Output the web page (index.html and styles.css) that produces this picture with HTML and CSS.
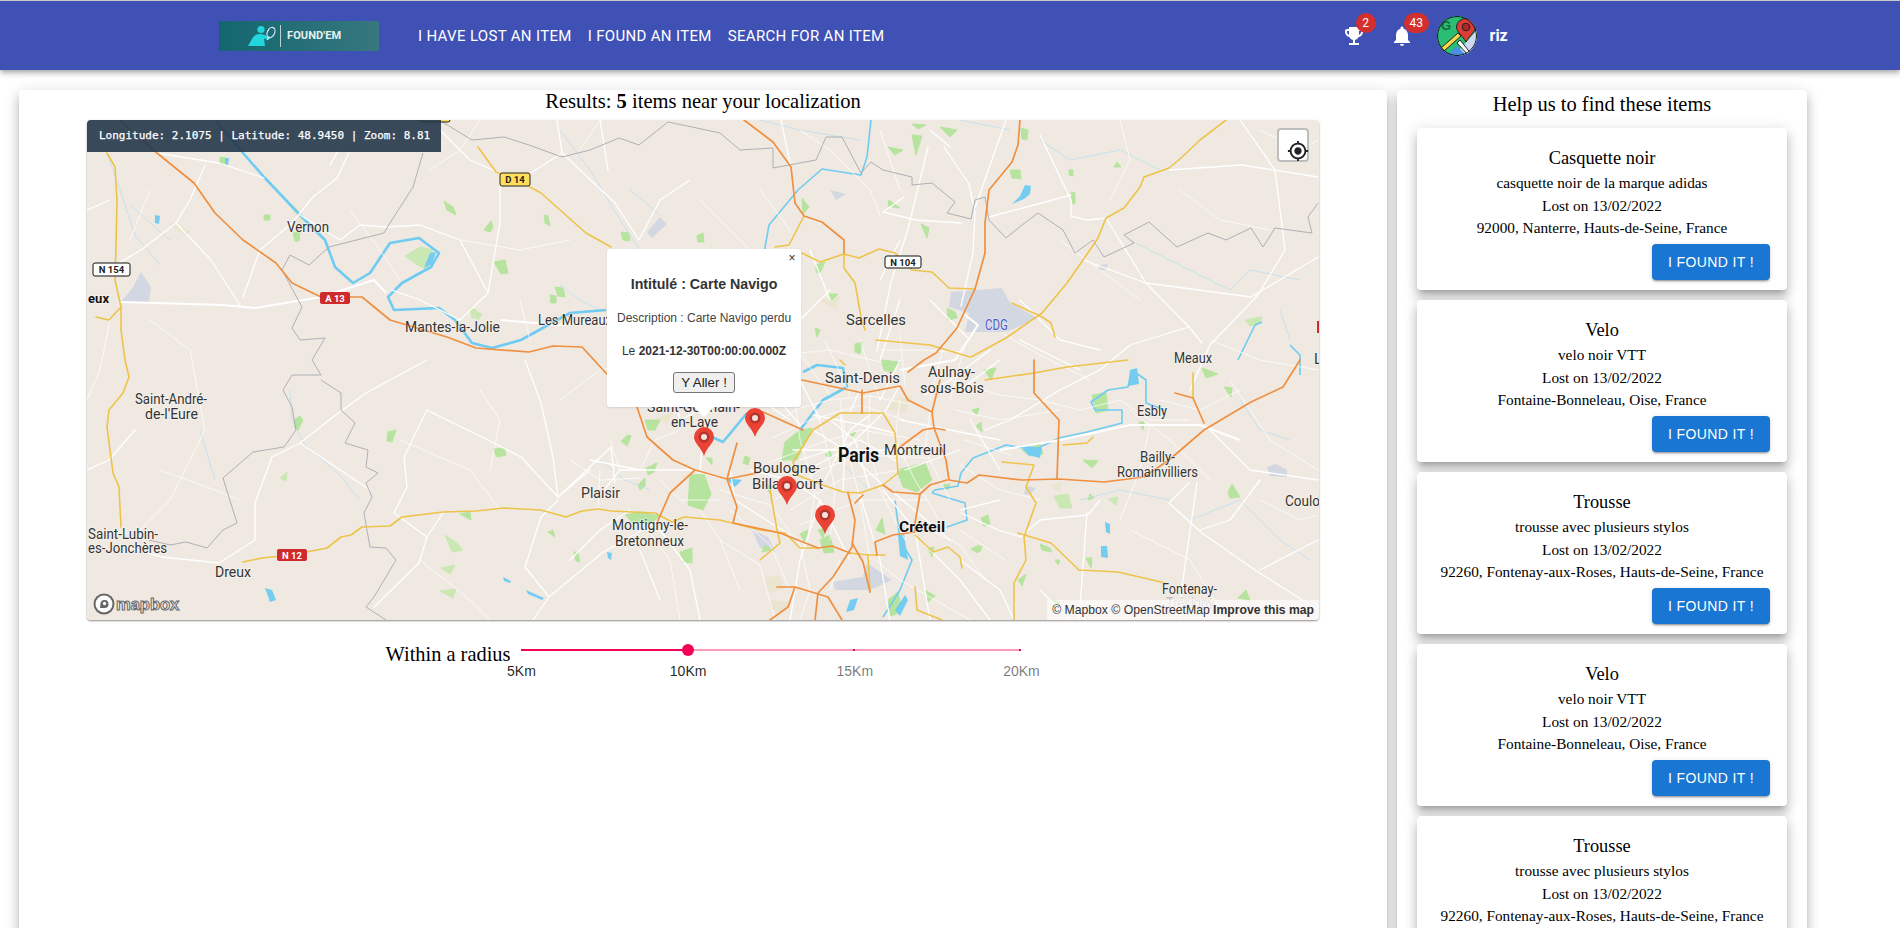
FILE: index.html
```html
<!DOCTYPE html>
<html lang="en">
<head>
<meta charset="utf-8">
<title>Found'Em</title>
<link rel="stylesheet" href="styles.css">
</head>
<body>
<header class="navbar">
  <div class="logo">
    <svg class="logo-fig" viewBox="0 0 30 22" width="30" height="22"><circle cx="14" cy="4.5" r="3.6" fill="#22d6de"/><path d="M1 21 L5 14 C7 10 10 8.5 14 9 L18 10 L23 13 L21.5 15 L17 13.5 L18 21 Z" fill="#22d6de"/><ellipse cx="24" cy="7.5" rx="3.6" ry="5.4" transform="rotate(25 24 7.5)" fill="none" stroke="#d5f4f5" stroke-width="1.2"/><path d="M22 12 L20 15" stroke="#d5f4f5" stroke-width="1.2"/></svg>
    <span class="logo-sep"></span>
    <span class="logo-text">FOUND'EM</span>
  </div>
  <nav class="nav">
    <a class="nav-link">I have lost an item</a>
    <a class="nav-link">I found an item</a>
    <a class="nav-link">Search for an item</a>
  </nav>
  <div class="nav-right">
    <div class="icon-wrap">
      <svg viewBox="0 0 24 24" width="24" height="24" fill="#fff"><path d="M19 5h-2V3H7v2H5c-1.1 0-2 .9-2 2v1c0 2.55 1.92 4.63 4.39 4.94.63 1.5 1.98 2.63 3.61 2.96V19H7v2h10v-2h-4v-3.1c1.63-.33 2.98-1.46 3.61-2.96C19.08 12.63 21 10.55 21 8V7c0-1.1-.9-2-2-2zM5 8V7h2v3.82C5.84 10.4 5 9.3 5 8zm14 0c0 1.3-.84 2.4-2 2.82V7h2v1z"/></svg>
      <span class="badge">2</span>
    </div>
    <div class="icon-wrap">
      <svg viewBox="0 0 24 24" width="24" height="24" fill="#fff"><path d="M12 22c1.1 0 2-.9 2-2h-4c0 1.1.89 2 2 2zm6-6v-5c0-3.07-1.64-5.64-4.5-6.32V4c0-.83-.67-1.5-1.5-1.5s-1.5.67-1.5 1.5v.68C7.63 5.36 6 7.92 6 11v5l-2 2v1h16v-1l-2-2z"/></svg>
      <span class="badge">43</span>
    </div>
    <svg class="avatar" viewBox="0 0 40 40" width="40" height="40">
      <defs><clipPath id="av"><circle cx="20" cy="20" r="20"/></clipPath></defs>
      <g clip-path="url(#av)">
        <rect width="40" height="40" fill="#2bbd74"/>
        <path d="M17 40 L40 14 V40 Z" fill="#ced8f2"/>
        <path d="M9 40 L20 30 L30 40 Z" fill="#4a90e2"/>
        <path d="M4 32 L21 17 L24 20 L7 35 Z" fill="#f7d84a" stroke="#222" stroke-width="1"/>
        <path d="M20 27 L32 40 H36 L23 24 Z" fill="#fff" stroke="#222" stroke-width="1"/>
        <path d="M29 26 C25 19 19.500 16 19.500 11 A9.500 8.500 0 0 1 38.500 11 C38.500 16 33 19 29 26 Z" fill="#dc3b36" stroke="#222" stroke-width="1"/>
        <circle cx="29" cy="11" r="3.8" fill="#a82a28" stroke="#222" stroke-width="1"/>
        <text class="avatar-g" x="4" y="14">G</text>
        <circle cx="20" cy="20" r="19.5" fill="none" stroke="#111" stroke-width="1"/>
      </g>
    </svg>
    <span class="username">riz</span>
  </div>
</header>

<main class="page">
  <section class="panel panel-main">
    <h2 class="results">Results: <b>5</b> items near your localization</h2>
    <div class="map">
      <svg class="map-svg" viewBox="87 120 1232 500" xmlns="http://www.w3.org/2000/svg">
        <rect x="87" y="120" width="1232" height="500" fill="#efe9e2"/>

        <g class="airport">
          <path d="M951 292 L1002 288 L1010 303 L1038 318 L1006 332 L965 332 L969 313 L949 307 Z"/>
          <path d="M867 563 L892 580 L870 590 L835 590 L833 582 L863 577 Z"/>
          <path d="M141 272 L151 287 L149 302 L121 302 L133 287 Z"/>
          <path d="M660 217 L667 224 L652 238 L647 232 Z"/>
          <path d="M1267 467 L1276 464 L1287 470 L1287 477 L1270 476 Z"/>
          <path d="M752 530 L768 537 L775 552 L760 548 Z"/>
          <path d="M1026 486 L1036 488 L1030 495 L1024 494 Z"/>
          <path d="M1100 265 L1108 264 L1106 270 L1098 270 Z"/>
          <path d="M830 190 L846 194 L836 200 Z"/>
        </g>

        <g class="sand">
          <path d="M765 578 L780 575 L784 590 L768 592 Z"/>
          <path d="M820 300 L840 296 L836 310 Z"/>
          <path d="M892 400 L912 396 L906 412 L888 410 Z"/>
          <path d="M655 418 L672 412 L668 424 Z"/>
          <path d="M695 400 L705 392 L708 400 Z"/>
          <path d="M770 600 L790 602 L785 612 L772 610 Z"/>
          <path d="M1050 485 L1062 482 L1060 492 Z"/>
          <path d="M760 296 L775 300 L768 310 Z"/>
          <path d="M300 228 L290 205 L296 206 L306 226 Z"/>
          <path d="M185 235 L170 225 L175 222 L190 232 Z"/>
        </g>

        <g class="green">
          <path d="M444 201 L453 207 L456 215 L447 210 Z"/>
          <path d="M484 230 L491 221 L493 227 L490 232 Z"/>
          <path d="M544 215 L548 216 L550 226 L545 223 Z"/>
          <path d="M621 232 L629 233 L630 241 L623 240 Z"/>
          <path d="M697 236 L703 233 L704 242 L698 242 Z"/>
          <path d="M293 233 L300 232 L299 241 L295 241 Z"/>
          <path class="pale" d="M405 256 L420 247 L433 250 L428 270 L416 264 Z"/>
          <path d="M494 262 L505 260 L508 273 L501 274 Z"/>
          <path d="M555 287 L563 288 L565 297 L558 296 Z"/>
          <path d="M550 295 L556 296 L556 303 L551 303 Z"/>
          <path class="pale" d="M470 308 L476 310 L478 318 L472 318 Z"/>
          <path class="pale" d="M472 310 L482 314 L478 320 Z"/>
          <path d="M264 215 L270 215 L270 220 L264 220 Z"/>
          <path d="M220 157 L226 158 L224 165 L220 163 Z"/>
          <path d="M294 420 L300 416 L303 420 L298 430 L295 428 Z"/>
          <path d="M388 432 L396 430 L392 442 L387 441 Z"/>
          <path d="M493 449 L504 448 L506 455 L497 457 Z"/>
          <path class="pale" d="M280 478 L287 472 L286 481 Z"/>
          <path d="M460 514 L470 512 L471 520 Z"/>
          <path class="pale" d="M445 535 L458 544 L463 550 L452 552 Z"/>
          <path class="pale" d="M441 568 L455 565 L450 574 Z"/>
          <path class="pale" d="M440 591 L456 589 L453 598 Z"/>
          <path d="M548 532 L553 530 L555 537 Z"/>
          <path d="M574 552 L578 552 L580 562 L576 561 Z"/>
          <path d="M621 441 L628 435 L631 436 L627 446 Z"/>
          <path d="M646 468 L657 463 L654 472 L648 475 Z"/>
          <path d="M638 485 L645 478 L645 486 L640 490 Z"/>
          <path d="M690 475 L704 474 L711 494 L703 510 L688 505 Z"/>
          <path d="M645 420 L660 420 L655 430 L648 430 Z"/>
          <path d="M625 515 L640 512 L660 516 L650 524 L632 522 Z"/>
          <path d="M680 552 L692 548 L692 563 L683 562 Z"/>
          <path d="M706 458 L712 458 L712 465 Z"/>
          <path d="M912 135 L922 136 L916 155 Z"/>
          <path d="M888 147 L903 150 L895 155 Z"/>
          <path d="M940 127 L957 130 L950 137 Z"/>
          <path d="M912 124 L926 125 L918 129 Z"/>
          <path d="M1021 128 L1028 130 L1027 140 L1022 139 Z"/>
          <path d="M1010 170 L1020 170 L1021 179 L1012 178 Z"/>
          <path d="M1071 192 L1075 193 L1075 204 L1072 203 Z"/>
          <path d="M802 198 L809 207 L803 214 Z"/>
          <path d="M889 200 L900 208 L888 206 Z"/>
          <path d="M921 224 L929 228 L927 238 Z"/>
          <path d="M1114 167 L1121 167 L1117 162 Z"/>
          <path d="M1069 170 L1073 170 L1073 176 L1069 175 Z"/>
          <path d="M816 265 L825 262 L820 273 L816 272 Z"/>
          <path d="M827 294 L838 294 L832 300 Z"/>
          <path d="M947 308 L955 312 L957 318 L948 320 Z"/>
          <path d="M855 344 L862 342 L860 354 L855 352 Z"/>
          <path class="pale" d="M1245 320 L1262 317 L1260 323 L1250 326 Z"/>
          <path d="M882 360 L900 362 L893 372 L884 370 Z"/>
          <path d="M984 370 L996 368 L991 380 Z"/>
          <path d="M972 410 L979 408 L977 415 Z"/>
          <path d="M976 426 L981 422 L982 432 Z"/>
          <path d="M1092 395 L1106 393 L1108 410 L1096 413 Z"/>
          <path d="M1202 368 L1218 374 L1206 378 Z"/>
          <path d="M1224 387 L1232 388 L1231 397 Z"/>
          <path d="M1139 422 L1144 422 L1143 430 Z"/>
          <path d="M1022 450 L1040 444 L1043 454 L1030 456 Z"/>
          <path d="M897 470 L925 463 L932 480 L917 492 L903 487 Z"/>
          <path d="M1083 460 L1098 461 L1092 468 Z"/>
          <path class="pale" d="M1054 496 L1068 494 L1072 508 L1060 508 Z"/>
          <path d="M1090 494 L1094 498 L1088 500 Z"/>
          <path class="pale" d="M1108 499 L1118 497 L1116 505 Z"/>
          <path d="M1228 492 L1232 484 L1240 497 L1230 498 Z"/>
          <path d="M981 518 L988 515 L990 524 L984 526 Z"/>
          <path d="M971 549 L979 545 L978 553 Z"/>
          <path d="M1040 544 L1050 548 L1052 552 L1042 550 Z"/>
          <path d="M1086 558 L1092 558 L1091 568 Z"/>
          <path d="M1018 580 L1026 574 L1022 586 Z"/>
          <path d="M1055 560 L1060 560 L1058 565 Z"/>
          <path d="M1238 598 L1246 590 L1250 600 Z"/>
          <path d="M942 485 L950 484 L948 490 Z"/>
          <path d="M818 530 L826 528 L823 538 Z"/>
          <path d="M800 534 L808 530 L805 542 Z"/>
          <path d="M876 530 L882 518 L885 534 Z"/>
          <path d="M928 548 L934 547 L932 557 Z"/>
          <path d="M975 548 L982 546 L980 552 Z"/>
          <path d="M820 540 L830 535 L834 552 L824 553 Z"/>
          <path d="M785 442 L800 430 L812 428 L797 460 L782 460 Z"/>
          <path d="M888 600 L898 592 L902 612 L890 616 Z"/>
          <path d="M925 590 L935 596 L928 602 Z"/>
          <path d="M745 456 L750 458 L748 465 L743 463 Z"/>
          <path d="M766 484 L772 486 L770 494 Z"/>
          <path d="M815 328 L820 330 L817 337 Z"/>
          <path d="M885 360 L890 365 L882 366 Z"/>
          <path d="M848 434 L856 432 L852 438 Z"/>
          <path d="M825 455 L830 450 L832 458 Z"/>
          <path d="M765 545 L772 550 L762 552 Z"/>
          <path d="M1053 600 L1060 602 L1054 608 Z"/>
        </g>

        <g class="rivlet">
          <path d="M107 153 L120 190 L135 235 L160 265 M130 205 L170 240"/>
          <path d="M200 430 L215 480 M290 390 L292 420 L305 445 L340 475 L360 500"/>
          <path d="M560 285 L580 300 L600 310 M600 460 L625 480 L650 490 M650 390 L670 380 L690 388"/>
          <path d="M1130 240 L1170 260 L1230 290 L1250 270 L1300 280 M1290 340 L1280 310 M1240 400 L1260 430 L1290 440"/>
          <path d="M560 130 L590 170 L620 220 L640 250 M630 190 L660 215"/>
          <path d="M1040 140 L1070 160 L1120 150 L1160 170"/>
          <path d="M1190 520 L1240 500 L1280 540 L1310 560"/>
          <path d="M760 120 L800 130 L860 140 M960 120 L1010 130"/>
          <path d="M1080 500 L1120 490 L1170 500"/>
          <path d="M843 465 L870 490"/>
        </g>

        <g class="water-line">
          <path d="M215 120 L243 153 L264 177 L300 215 L325 240 L335 267 L353 283 L370 273 L390 243 L419 238 L439 253 L431 267 L402 283 L388 297 L394 310 L439 308 L455 320 L472 343 L492 348 L521 340 L570 313 L606 310"/>
          <path d="M747 413 L733 430 L723 442 L712 437"/>
          <path d="M800 430 L823 400 L847 387 L843 368 L817 365 L803 372"/>
        </g>
        <g class="water-thin">
          <path d="M871 120 L867 157 L861 175 L822 169 L798 190 L769 225 L761 270 L749 284"/>
          <path d="M961 473 L973 458 L1006 445 L1034 450 L1059 438 L1087 432 L1122 423 L1122 410 L1095 410 L1091 402 L1108 390 L1128 387 L1132 370 L1146 380 L1146 403 L1165 410"/>
          <path d="M932 493 L965 503 L967 520 L947 527"/>
          <path d="M895 500 L900 540 L912 560 L900 590 L883 617"/>
          <path d="M961 473 L958 486 L935 490 L932 493"/>
          <path d="M1238 360 L1255 325 L1262 322 M1290 345 L1300 355 L1300 375"/>
        </g>
        <g class="lake">
          <path d="M1020 196 L1025 185 L1031 186 L1030 194 L1024 199 L1012 204 Z"/>
          <path d="M265 588 L272 590 L276 600 L270 602 Z"/>
          <path d="M503 577 L511 581 L510 583 L504 581 Z"/>
          <path d="M526 590 L544 598 L542 600 L528 594 Z"/>
          <path d="M607 552 L612 553 L611 560 L608 558 Z"/>
          <path d="M155 215 L160 216 L159 224 L155 223 Z"/>
          <path d="M1101 546 L1107 546 L1108 558 L1101 557 Z"/>
          <path d="M1105 522 L1110 524 L1110 534 L1106 532 Z"/>
          <path d="M1130 370 L1137 368 L1139 384 L1128 386 Z"/>
          <path d="M1020 445 L1042 448 L1040 458 L1028 455 Z"/>
          <path d="M430 253 L436 252 L432 264 L424 268 Z"/>
          <path d="M225 158 L229 158 L228 165 L225 164 Z"/>
          <path d="M725 478 L742 480 L735 487 Z"/>
          <path d="M898 535 L904 534 L908 560 L900 556 Z"/>
          <path d="M850 600 L858 598 L854 610 L846 612 Z"/>
          <path d="M895 610 L905 595 L908 600 L900 616 Z"/>
        </g>

        <g class="road-fine">
          <path d="M780 420 L800 408 L830 400 L870 396 L910 404 M772 438 L810 420 L860 405 L905 420 M770 462 L815 445 L860 430 L920 440"/>
          <path d="M775 500 L820 470 L862 455 L930 458 M790 510 L840 480 L900 470 M800 525 L860 500 L930 500"/>
          <path d="M815 405 L825 440 L835 490 L830 540 M840 400 L848 450 L860 500 L870 560 M870 395 L868 440 L880 490 L905 540"/>
          <path d="M795 400 L800 440 L815 490 L808 540 M900 400 L895 440 L915 480 L945 530 M930 410 L925 450 L950 500"/>
          <path d="M740 360 L770 400 M760 350 L800 395 M790 340 L830 395 M825 340 L850 395 M860 340 L880 400 M900 335 L905 385"/>
          <path d="M945 340 L930 400 M965 345 L950 400 M880 350 L920 350 L960 352 M780 355 L830 350 L880 362"/>
          <path d="M950 380 L1000 395 L1040 400 M955 410 L1000 420 L1060 410 M965 440 L1010 455 M960 465 L1000 490 L1040 500"/>
          <path d="M720 490 L770 505 L800 545 L810 590 L800 620 M730 510 L770 545 L790 590 M720 540 L760 565 L775 620"/>
          <path d="M840 560 L830 590 M875 560 L900 580 L935 600 L970 620 M930 530 L960 545 L985 580 M960 530 L1005 560"/>
          <path d="M640 470 L655 440 L680 430 M660 480 L680 500 L720 500 M700 510 L720 540 L740 590 M640 520 L670 560 L680 620"/>
          <path d="M570 460 L600 480 L640 478 M610 440 L620 470 M598 510 L600 470 M1005 335 L1040 355 L1090 380 M1120 400 L1150 420 L1190 420"/>
          <path d="M1130 410 L1170 440 L1210 480 M1150 425 L1140 470 L1120 520 M1160 400 L1200 410 L1240 390 M1040 400 L1080 410 L1120 400"/>
          <path d="M1230 380 L1270 440 L1318 470 M1210 340 L1260 360 L1318 370 M1260 500 L1300 520 L1318 515 M1130 530 L1190 560 L1220 610"/>
          <path d="M800 130 L830 150 L870 190 L880 215 M760 190 L790 230 M700 200 L740 240 L770 270 M880 130 L900 190"/>
          <path d="M1120 120 L1130 160 L1110 200 M1180 190 L1220 220 L1270 230 M1260 130 L1300 150 L1318 140 M1060 240 L1100 270 L1140 300"/>
          <path d="M150 190 L130 240 M150 320 L190 350 L205 430 L170 500 L130 540 M110 320 L100 370 L87 400 M160 470 L215 490 L240 500"/>
          <path d="M350 210 L380 250 L400 280 M460 240 L520 250 L570 240 M520 300 L530 340 M600 120 L580 150 M480 120 L460 150 L430 170"/>
          <path d="M400 440 L470 470 L500 510 M480 390 L500 420 L490 470 M560 400 L600 370 L640 360 M420 560 L470 600 L490 620"/>
        </g>
        <g class="road-thin">
          <path d="M107 270 L141 250 L176 223 L190 200 L205 165 M176 223 L211 260 L241 307"/>
          <path d="M349 153 L337 178 L313 197 L292 223 L260 250 L243 297 M87 210 L110 200 M87 470 L109 460 L135 430"/>
          <path d="M264 178 L219 163 L157 153 M300 215 L340 240 L360 225 L386 227"/>
          <path d="M500 173 L500 223 L488 293 L460 320 M386 227 L420 225 L460 240 L488 293"/>
          <path d="M557 120 L562 153 L615 203 L639 240 L660 200 L690 180 M562 153 L520 180 L500 173"/>
          <path d="M392 290 L420 300 L460 320 M440 130 L470 160 L500 173 M350 130 L330 165"/>
          <path d="M366 393 L333 417 L300 443 L272 457 L255 503 L255 540 L219 563 L162 557 L120 545 M300 443 L370 490"/>
          <path d="M427 410 L447 420 L488 440 L521 457 L558 497 L611 447 L615 483 M558 497 L590 470"/>
          <path d="M427 410 L404 457 L407 487 L394 513 L427 537 L443 513 M427 537 L419 563 L374 607"/>
          <path d="M558 500 L541 517 L525 567 L549 597 L602 553 L660 520 M549 597 L533 620"/>
          <path d="M525 360 L541 403 L553 457 L558 497 M427 360 L366 393"/>
          <path d="M781 120 L791 167 M944 147 L969 184 L975 212 L973 253 L961 306 M1006 120 L975 208"/>
          <path d="M928 147 L908 229 L891 282 L877 351 M930 130 L950 147"/>
          <path d="M989 217 L1034 205 L1071 195 M1169 170 L1242 165 L1318 177 M1083 260 L1146 283 L1251 297 L1318 257"/>
          <path d="M883 212 L916 220 L961 223 M904 197 L883 212 M1106 218 L1146 283 L1189 327 L1202 343"/>
          <path d="M1189 483 L1169 503 L1202 533 L1255 570 L1318 610 M1197 483 L1181 593 L1181 620 M1087 513 L1079 620"/>
          <path d="M961 513 L998 530 L1022 537 M1189 327 L1130 345 L1100 370 L1060 390 L1010 420 L985 430"/>
          <path d="M1040 135 L1071 200 L1071 216 L1087 220 L1106 218 M1240 120 L1275 170 L1285 250 L1258 295 L1210 345 L1190 390"/>
          <path d="M1210 430 L1250 470 L1318 480 M1260 480 L1230 520 L1200 530 M1318 540 L1260 570"/>
          <path d="M1100 500 L1088 515 L1040 520 L1020 537 M960 560 L1000 590 L1014 620 M1040 590 L1070 620"/>
          <path d="M640 360 L670 380 L680 420 L700 410 L725 400 M640 470 L620 470 L600 495 M590 460 L640 470 L690 470 L727 479"/>
          <path d="M700 470 L704 430 M630 510 L600 530 L570 560 M660 530 L690 570 L700 620 M730 470 L735 500 L790 535"/>
          <path d="M600 120 L608 170 M660 250 L620 300 L607 330 M640 550 L660 600"/>
          <path d="M760 400 L790 420 M800 300 L780 340 M830 290 L800 320 M900 300 L880 360 M930 300 L970 340 M1000 360 L960 390 M970 420 L1000 470"/>
          <path d="M810 250 L830 300 M900 240 L880 280 M1020 300 L1060 340 L1100 350 M1020 340 L1080 370"/>
          <path d="M845 450 L813 430 M845 450 L840 413 M845 450 L883 413 M845 450 L898 450 M845 450 L883 485 M845 450 L843 492 M845 450 L797 475 M845 450 L793 450"/>
          <path d="M813 415 L862 425 L895 433 M800 460 L860 440 L898 462 M825 480 L850 430 L870 415 M870 490 L855 440 L830 420"/>
          <path d="M900 420 L950 430 L1000 440 M905 470 L960 450 M925 395 L950 380 L990 350 M880 400 L900 360"/>
          <path d="M750 470 L790 480 L820 500 L850 560 M820 500 L800 560 L790 620 M860 495 L880 560 L890 620 M883 490 L915 530 L930 620"/>
          <path d="M915 535 L960 580 L990 620 M960 510 L1000 500 M893 492 L950 540 M770 390 L800 425 M800 380 L820 420"/>
          <path d="M860 390 L850 412 M900 385 L885 412"/>
        </g>
        <g class="road-main">
          <path d="M121 302 L223 305 L255 308 L321 297 L374 280 L386 293"/>
          <path d="M500 320 L560 325 L610 320"/>
          <path d="M1000 450 L1060 440 L1130 425 L1200 425 L1240 440"/>
          <path d="M900 370 L955 360 L978 325 L965 315"/>
        </g>

        <g class="border">
          <path d="M439 120 L472 140 L504 137 L529 145 L562 157 L590 150 L619 138 L639 145 L668 122 L692 127 L720 133 L740 150 L773 148 L773 168 L816 160 L826 137 L842 137 L861 173 L871 162 L883 170 L912 177 L912 185 L932 183 L955 202 L947 213 L971 219 L975 200 L985 197 L989 220 L1006 238 L1022 225 L1038 213 L1063 230 L1075 253 L1093 240 L1104 257 L1134 243 L1124 235 L1149 222 L1177 247 L1208 233 L1226 240 L1251 228 L1263 247 L1275 228 L1312 233 L1308 217 L1318 203"/>
          <path d="M423 153 L413 187 L390 223 L384 233 L329 247 L309 265 L290 255 L282 270 L302 307 L292 328 L300 340 L325 338 L312 360 L321 375 L292 375 L283 390 L292 407 L296 430 L284 447 L253 452 L223 478 L237 523 L223 530 L207 548 L186 542 L170 545 L149 540"/>
          <path d="M321 380 L341 393 L341 410 L355 423 L345 443 L368 450 L366 467 L378 473 L366 483 L372 497 L364 513 L370 547 L386 548 L396 560 L374 597 L366 607 L386 620"/>
        </g>

        <g class="yellow">
          <path d="M107 153 L115 167 L117 200 L116 247 L115 280 L121 307 L121 330 L125 360 L129 377 L123 393 L109 410 L107 427 L113 473 L119 487 L121 527"/>
          <path d="M96 317 L109 320 L121 307"/>
          <path d="M243 562 L262 558 L291 555 L327 548 L341 537 L351 535 L362 527 L390 526 L402 517 L443 512 L476 511 L504 508 L541 510 L566 517 L582 511 L598 509 L611 511 L655 513 L672 522 L684 517 L720 520 L760 530 L785 533"/>
          <path d="M478 147 L496 172 L515 179 L541 193 L586 233 L611 247"/>
          <path d="M775 247 L789 245 L804 216 M802 253 L820 262 L844 254 L859 258 L879 249 L895 253 L912 270 L932 272 L949 288 L975 289"/>
          <path d="M844 253 L844 268 L855 283 L861 317 L865 330"/>
          <path d="M1226 120 L1200 140 L1181 158 L1169 168 L1144 177 L1140 187 L1124 208 L1106 218 L1098 238 L1083 260 L1067 283 L1042 313 L1006 338 L971 357"/>
          <path d="M1012 303 L1042 317 L1051 323 L1055 337"/>
          <path d="M813 430 L840 413 L883 413 L895 433 L898 473 L883 485 L860 493 L843 492 L823 485 L797 475 L793 462 Z"/>
          <path d="M770 490 L777 530 L780 543 L760 560 M785 533 L800 548 L818 548 M850 553 L868 555 L885 555"/>
          <path d="M915 587 L917 610 L942 620 M915 535 L933 552 L948 547 L960 557 L962 568"/>
          <path d="M1002 462 L1034 465 L1026 487 L1036 503 L1024 537 L1026 560 L1014 583 L1014 620"/>
          <path d="M1018 533 L1051 543 L1079 570 L1118 572 L1165 583"/>
          <path d="M1193 373 L1193 398 M985 380 L1034 373 L1067 367 L1128 360"/>
          <path d="M1063 445 L1087 443 L1093 437 M876 340 L930 345 L970 357"/>
          <path d="M870 592 L868 555 M840 360 L845 365"/>
        </g>
        <g class="orange">
          <path d="M120 120 L157 153 L194 183 L215 213 L243 240 L276 263 L292 283 L321 297 L362 297 L390 320 L447 337 L476 348 L529 352 L553 346 L582 347 L594 360 L637 407 L647 437 L673 460 L695 470 L727 479 L757 473"/>
          <path d="M695 470 L670 493 L657 523 M737 443 L727 479 L737 507 L733 523 L780 533 L818 548"/>
          <path d="M744 120 L773 142 L791 167 L795 203 L804 216 L822 222 L844 240 L844 253"/>
          <path d="M1020 120 L1018 145 L1012 162 L989 190 L985 223 L985 253 L975 289 L957 328 L936 353 L924 360 L908 372"/>
          <path d="M763 412 L803 430"/>
          <path d="M802 380 L863 393 L900 386 L908 400 L932 412 L934 428 L946 460 L949 480 L967 483 L979 475 L1022 480 L1059 479 L1104 482 L1144 477 L1169 460 L1204 430 L1251 402 L1283 387 L1300 360"/>
          <path d="M862 390 L862 413 M932 412 L940 380 M934 428 L945 430 M934 428 L923 430 L900 447"/>
          <path d="M1034 360 L1034 393 L1059 420 L1057 479 M1175 393 L1193 398 L1204 423"/>
          <path d="M883 485 L893 492 L920 494 L930 485 L947 480 M920 494 L915 523 L915 532 L893 535 L875 542 L877 555"/>
          <path d="M848 493 L855 520 L852 547 L833 577 L818 593 L815 620 M855 503 L863 495 M852 543 L863 562 L870 592"/>
          <path d="M818 548 L832 546 L850 553 M777 587 L795 587 L828 597 L842 620 M795 587 L788 607 L770 620"/>
        </g>

        <g class="shield">
          <rect class="sh-white" x="93" y="263" width="37" height="13" rx="2"/><text class="sh-t" x="111.500" y="273">N 154</text>
          <rect class="sh-yellow" x="500" y="173" width="30" height="13" rx="2"/><text class="sh-t" x="515" y="183">D 14</text>
          <rect class="sh-red" x="320" y="292" width="30" height="12" rx="2"/><text class="sh-t sh-tw" x="335" y="302">A 13</text>
          <rect class="sh-red" x="277" y="549" width="30" height="12" rx="2"/><text class="sh-t sh-tw" x="292" y="559">N 12</text>
          <rect class="sh-white" x="885" y="256" width="36" height="12" rx="2"/><text class="sh-t" x="903" y="266">N 104</text>
          <rect class="sh-yellow" x="420" y="112" width="30" height="10" rx="2"/>
          <rect class="sh-red" x="1317" y="321" width="6" height="12"/>
        </g>

        <g class="labels">
          <text class="lb" x="287" y="232" textLength="42" lengthAdjust="spacingAndGlyphs">Vernon</text>
          <text class="lb" x="405" y="332" textLength="95" lengthAdjust="spacingAndGlyphs">Mantes-la-Jolie</text>
          <text class="lb" x="538" y="325" textLength="74" lengthAdjust="spacingAndGlyphs">Les Mureaux</text>
          <text class="lb lb-b" x="109" y="303" text-anchor="end">eux</text>
          <text class="lb" x="135" y="404" textLength="72" lengthAdjust="spacingAndGlyphs">Saint-André-</text>
          <text class="lb" x="145" y="419" textLength="53" lengthAdjust="spacingAndGlyphs">de-l'Eure</text>
          <text class="lb" x="88" y="539" textLength="70" lengthAdjust="spacingAndGlyphs">Saint-Lubin-</text>
          <text class="lb" x="88" y="553" textLength="79" lengthAdjust="spacingAndGlyphs">es-Jonchères</text>
          <text class="lb" x="215" y="577" textLength="36" lengthAdjust="spacingAndGlyphs">Dreux</text>
          <text class="lb" x="581" y="498" textLength="39" lengthAdjust="spacingAndGlyphs">Plaisir</text>
          <text class="lb" x="612" y="530" textLength="76" lengthAdjust="spacingAndGlyphs">Montigny-le-</text>
          <text class="lb" x="615" y="546" textLength="69" lengthAdjust="spacingAndGlyphs">Bretonneux</text>
          <text class="lb" x="647" y="412" textLength="93" lengthAdjust="spacingAndGlyphs">Saint-Germain-</text>
          <text class="lb" x="671" y="427" textLength="47" lengthAdjust="spacingAndGlyphs">en-Laye</text>
          <text class="lb" x="846" y="325" textLength="60" lengthAdjust="spacingAndGlyphs">Sarcelles</text>
          <text class="lb lb-cdg" x="985" y="330" textLength="23" lengthAdjust="spacingAndGlyphs">CDG</text>
          <text class="lb" x="1174" y="363" textLength="38" lengthAdjust="spacingAndGlyphs">Meaux</text>
          <text class="lb" x="825" y="383" textLength="75" lengthAdjust="spacingAndGlyphs">Saint-Denis</text>
          <text class="lb" x="928" y="377" textLength="47" lengthAdjust="spacingAndGlyphs">Aulnay-</text>
          <text class="lb" x="920" y="393" textLength="64" lengthAdjust="spacingAndGlyphs">sous-Bois</text>
          <text class="lb" x="1137" y="416" textLength="30" lengthAdjust="spacingAndGlyphs">Esbly</text>
          <text class="lb" x="884" y="455" textLength="62" lengthAdjust="spacingAndGlyphs">Montreuil</text>
          <text class="lb lb-b lb-xl" x="838" y="462" textLength="41" lengthAdjust="spacingAndGlyphs">Paris</text>
          <text class="lb" x="753" y="473" textLength="67" lengthAdjust="spacingAndGlyphs">Boulogne-</text>
          <text class="lb" x="752" y="489" textLength="71" lengthAdjust="spacingAndGlyphs">Billancourt</text>
          <text class="lb" x="1140" y="462" textLength="35" lengthAdjust="spacingAndGlyphs">Bailly-</text>
          <text class="lb" x="1117" y="477" textLength="81" lengthAdjust="spacingAndGlyphs">Romainvilliers</text>
          <text class="lb" x="1285" y="506" textLength="35" lengthAdjust="spacingAndGlyphs">Coulo</text>
          <text class="lb lb-b lb-l" x="899" y="532" textLength="46" lengthAdjust="spacingAndGlyphs">Créteil</text>
          <text class="lb" x="1162" y="594" textLength="55" lengthAdjust="spacingAndGlyphs">Fontenay-</text>
          <text class="lb lb-faint" x="1166" y="608" textLength="48" lengthAdjust="spacingAndGlyphs">Trésigny</text>
          <text class="lb" x="1314" y="364">L</text>
        </g>

        <g class="pins">
          <g transform="translate(704 456)"><path class="pin-b" d="M0 0 C-3 -9 -10 -13 -10 -19 A10 10 0 0 1 10 -19 C10 -13 3 -9 0 0 Z"/><circle class="pin-d" cx="0" cy="-19" r="5.5"/><circle class="pin-c" cx="0" cy="-19" r="3"/></g>
          <g transform="translate(755 437)"><path class="pin-b" d="M0 0 C-3 -9 -10 -13 -10 -19 A10 10 0 0 1 10 -19 C10 -13 3 -9 0 0 Z"/><circle class="pin-d" cx="0" cy="-19" r="5.5"/><circle class="pin-c" cx="0" cy="-19" r="3"/></g>
          <g transform="translate(787 505)"><path class="pin-b" d="M0 0 C-3 -9 -10 -13 -10 -19 A10 10 0 0 1 10 -19 C10 -13 3 -9 0 0 Z"/><circle class="pin-d" cx="0" cy="-19" r="5.5"/><circle class="pin-c" cx="0" cy="-19" r="3"/></g>
          <g transform="translate(825 534)"><path class="pin-b" d="M0 0 C-3 -9 -10 -13 -10 -19 A10 10 0 0 1 10 -19 C10 -13 3 -9 0 0 Z"/><circle class="pin-d" cx="0" cy="-19" r="5.500"/><circle class="pin-c" cx="0" cy="-19" r="3"/></g>
        </g>
      </svg>

      <div class="coords">Longitude: 2.1075 | Latitude: 48.9450 | Zoom: 8.81</div>
      <div class="geo">
        <svg viewBox="0 0 24 24" width="22" height="22" fill="#222"><path d="M12 8c-2.21 0-4 1.79-4 4s1.79 4 4 4 4-1.79 4-4-1.79-4-4-4zm8.94 3c-.46-4.17-3.77-7.48-7.94-7.94V1h-2v2.06C6.83 3.52 3.52 6.83 3.06 11H1v2h2.06c.46 4.17 3.77 7.48 7.94 7.94V23h2v-2.06c4.17-.46 7.48-3.77 7.94-7.94H23v-2h-2.06zM12 19c-3.87 0-7-3.13-7-7s3.13-7 7-7 7 3.13 7 7-3.13 7-7 7z"/></svg>
      </div>
      <div class="mapbox-logo">
        <svg viewBox="0 0 22 22" width="22" height="22"><circle cx="11" cy="11" r="9.500" fill="#fff" fill-opacity=".85" stroke="#666" stroke-width="2"/><path d="M7 15 L7.500 10.500 A4 4 0 1 1 11.500 15 Z" fill="#666"/><circle cx="11.500" cy="10.500" r="1.700" fill="#fff"/></svg>
        <span class="mapbox-text">mapbox</span>
      </div>
      <div class="attrib">© Mapbox © OpenStreetMap <b>Improve this map</b></div>

      <div class="popup">
        <button class="popup-close">×</button>
        <p class="popup-title">Intitulé : Carte Navigo</p>
        <p class="popup-desc">Description : Carte Navigo perdu</p>
        <p class="popup-date">Le <b>2021-12-30T00:00:00.000Z</b></p>
        <button class="popup-btn">Y Aller !</button>
        <span class="popup-tip"></span>
      </div>
    </div>

    <div class="radius">
      <span class="radius-label">Within a radius</span>
      <div class="slider">
        <div class="track">
          <div class="track-on"></div>
          <span class="thumb"></span>
          <span class="tick tick-3"></span>
          <span class="tick tick-4"></span>
        </div>
        <div class="marks">
          <span class="mark on"><i>5Km</i></span>
          <span class="mark on"><i>10Km</i></span>
          <span class="mark"><i>15Km</i></span>
          <span class="mark"><i>20Km</i></span>
        </div>
      </div>
    </div>
  </section>

  <aside class="panel panel-side">
    <h2 class="side-title">Help us to find these items</h2>
    <article class="card">
      <h3>Casquette noir</h3>
      <p>casquette noir de la marque adidas</p>
      <p>Lost on 13/02/2022</p>
      <p>92000, Nanterre, Hauts-de-Seine, France</p>
      <div class="card-actions"><button class="found">I found it !</button></div>
    </article>
    <article class="card">
      <h3>Velo</h3>
      <p>velo noir VTT</p>
      <p>Lost on 13/02/2022</p>
      <p>Fontaine-Bonneleau, Oise, France</p>
      <div class="card-actions"><button class="found">I found it !</button></div>
    </article>
    <article class="card">
      <h3>Trousse</h3>
      <p>trousse avec plusieurs stylos</p>
      <p>Lost on 13/02/2022</p>
      <p>92260, Fontenay-aux-Roses, Hauts-de-Seine, France</p>
      <div class="card-actions"><button class="found">I found it !</button></div>
    </article>
    <article class="card">
      <h3>Velo</h3>
      <p>velo noir VTT</p>
      <p>Lost on 13/02/2022</p>
      <p>Fontaine-Bonneleau, Oise, France</p>
      <div class="card-actions"><button class="found">I found it !</button></div>
    </article>
    <article class="card">
      <h3>Trousse</h3>
      <p>trousse avec plusieurs stylos</p>
      <p>Lost on 13/02/2022</p>
      <p>92260, Fontenay-aux-Roses, Hauts-de-Seine, France</p>
      <div class="card-actions"><button class="found">I found it !</button></div>
    </article>
  </aside>
</main>
</body>
</html>
```

FILE: styles.css
```css
* { box-sizing: border-box; }
html, body { margin: 0; height: 100%; overflow: hidden; }
body { background: #fff; font-family: "Liberation Serif", serif; color: #000; }

.navbar {
  position: relative;
  z-index: 2;
  display: flex;
  align-items: center;
  height: 70px;
  padding-left: 219px;
  background: #3f51b5;
  border-top: 1px solid #c9c9c9;
  box-shadow: 0 2px 4px -1px rgba(0,0,0,.2), 0 4px 5px 0 rgba(0,0,0,.14), 0 1px 10px 0 rgba(0,0,0,.12);
  font-family: Roboto, sans-serif;
  color: #fff;
}
.logo {
  display: flex;
  align-items: center;
  width: 160px;
  height: 30px;
  padding-left: 28px;
  background: linear-gradient(90deg, #13666f, #37777f);
}
.logo-fig { flex: none; }
.logo-sep { width: 1px; height: 22px; margin: 0 6px 0 3px; background: #b9d3d5; }
.logo-text { font-size: 11px; font-weight: 700; color: #e4f1f1; letter-spacing: .1px; }
.nav { display: flex; margin-left: 31px; }
.nav-link {
  padding: 6px 8px;
  font-size: 15px;
  line-height: 20px;
  text-transform: uppercase;
  letter-spacing: .33px;
}
.nav-right { display: flex; align-items: center; margin-left: 449px; }
.icon-wrap { position: relative; display: flex; width: 24px; height: 24px; margin-right: 24px; }
.badge {
  position: absolute;
  top: -11px;
  left: 50%;
  margin-left: 2px;
  min-width: 20px;
  height: 20px;
  padding: 0 6px;
  border-radius: 10px;
  background: #d32f2f;
  font-size: 12px;
  line-height: 20px;
  text-align: center;
}
.avatar { flex: none; margin-left: -1px; }
.avatar-g { font: 700 13px "Liberation Sans", sans-serif; fill: #17663f; }
.username { margin-left: 13px; font-size: 16px; font-weight: 700; }

.page { display: flex; align-items: flex-start; gap: 10px; padding: 20px 0 0 19px; }
.panel {
  background: #fff;
  border-radius: 4px;
  box-shadow: 0 5px 5px -3px rgba(0,0,0,.2), 0 8px 10px 1px rgba(0,0,0,.14), 0 3px 14px 2px rgba(0,0,0,.12);
}
.panel-main { flex: none; width: 1368px; min-height: 1000px; padding: 0 68px; }
.panel-side { flex: none; width: 410px; padding: 0 20px 20px; }
.results { margin: 0; height: 30px; font-size: 20.55px; font-weight: 400; line-height: 22px; text-align: center; }
.results b { font-weight: 700; }

.map {
  position: relative;
  height: 500px;
  border-radius: 4px;
  overflow: hidden;
  box-shadow: 0 1px 2px rgba(0,0,0,.45);
}
.map-svg { display: block; width: 100%; height: 100%; }
.airport path { fill: #d3d7e2; }
.sand path { fill: #e8e2c8; opacity: .7; }
.green path { fill: #b6e49e; stroke: #b6e49e; stroke-width: 1; stroke-linejoin: round; }
.green path.pale { fill: #cae8b4; stroke: #cae8b4; }
.lake path { fill: #74cdf0; }
.rivlet path { fill: none; stroke: #bcdff0; stroke-width: .8; }
.water-line path { fill: none; stroke: #6fcbf1; stroke-width: 2.6; stroke-linejoin: round; }
.water-thin path { fill: none; stroke: #6fcbf1; stroke-width: 1.6; stroke-linejoin: round; }
.road-fine path { fill: none; stroke: #fff; stroke-width: .8; stroke-linejoin: round; stroke-linecap: round; opacity: .9; }
.road-thin path { fill: none; stroke: #fff; stroke-width: 1.3; stroke-linejoin: round; stroke-linecap: round; }
.road-main path { fill: none; stroke: #fff; stroke-width: 2; stroke-linejoin: round; }
.border path { fill: none; stroke: #a7a8b0; stroke-width: .9; stroke-linejoin: round; }
.yellow path { fill: none; stroke: #eec34a; stroke-width: 1.6; stroke-linejoin: round; stroke-linecap: round; }
.orange path { fill: none; stroke: #f08f3f; stroke-width: 1.7; stroke-linejoin: round; stroke-linecap: round; }

.sh-white { fill: #fff; stroke: #111; stroke-width: 1; }
.sh-yellow { fill: #ffdf5a; stroke: #222; stroke-width: 1; }
.sh-red { fill: #cf2a2c; }
.sh-t { font: 700 9.5px Roboto, sans-serif; fill: #222; text-anchor: middle; }
.sh-tw { fill: #fff; }

.lb {
  font: 400 14.5px Roboto, sans-serif;
  fill: #333;
  stroke: rgba(255,255,255,.5);
  stroke-width: 1.5;
  paint-order: stroke;
}
.lb-b { font-size: 13px; font-weight: 700; fill: #111; }
.lb-l { font-size: 15px; }
.lb-xl { font-size: 20px; }
.lb-cdg { fill: #4b5cc4; }
.lb-faint { fill: #999; opacity: .6; }

.pin-b { fill: #ea4335; }
.pin-d { fill: #b6352b; }
.pin-c { fill: #f3e4df; }

.coords {
  position: absolute;
  top: 0;
  left: 0;
  width: 354px;
  height: 32px;
  padding: 0 12px;
  background: rgba(35,55,75,.9);
  color: #fff;
  font: 11px/32px "DejaVu Sans Mono", monospace;
  -webkit-text-stroke: .25px #fff;
  white-space: nowrap;
}
.geo {
  position: absolute;
  top: 8px;
  right: 10px;
  display: flex;
  align-items: flex-end;
  justify-content: flex-end;
  width: 32px;
  height: 34px;
  background: #fff;
  border: 2px solid #bdbdbd;
  border-radius: 4px;
}
.geo svg { flex: none; margin: 0 -2px -2px 0; }
.mapbox-logo { position: absolute; left: 6px; bottom: 5px; display: flex; align-items: center; gap: 1px; }
.mapbox-text {
  font: 700 16.5px "Liberation Sans", sans-serif;
  color: #eef;
  -webkit-text-stroke: 1px #666;
}
.attrib {
  position: absolute;
  right: 0;
  bottom: 0;
  height: 20px;
  padding: 0 5px;
  background: rgba(255,255,255,.6);
  color: #333;
  font: 12.2px/20px "Liberation Sans", sans-serif;
  white-space: nowrap;
}
.attrib b { font-weight: 700; }

.popup {
  position: absolute;
  left: 520px;
  top: 129px;
  width: 194px;
  height: 158px;
  padding: 10px 10px 0;
  background: #fff;
  border-radius: 3px;
  box-shadow: 0 1px 2px rgba(0,0,0,.1);
  text-align: center;
  font-family: "Liberation Sans", sans-serif;
  color: #333;
}
.popup p { margin: 0; white-space: nowrap; }
.popup-close {
  position: absolute;
  top: 0;
  right: 0;
  width: 18px;
  height: 18px;
  padding: 0;
  border: 0;
  background: none;
  color: #333;
  font-size: 12px;
  line-height: 18px;
}
.popup-title { padding-top: 17px; font-size: 14.2px; font-weight: 700; line-height: 16px; }
.popup-desc { padding-top: 18px; font-size: 12px; line-height: 16px; color: #444; }
.popup-date { padding-top: 17px; font-size: 12px; line-height: 16px; }
.popup-btn {
  display: block;
  width: 62px;
  height: 21px;
  margin: 13px auto 0;
  padding: 0;
  background: #efefef;
  border: 1px solid #767676;
  border-radius: 3px;
  color: #222;
  font: 13.33px/19px "Liberation Sans", sans-serif;
}
.popup-tip {
  position: absolute;
  left: 87px;
  top: 100%;
  border-left: 10px solid transparent;
  border-right: 10px solid transparent;
  border-top: 10px solid #fff;
}

.radius { display: flex; justify-content: center; gap: 11px; margin-top: 20px; padding-left: 1px; }
.radius-label { margin-top: 3px; font-size: 20.4px; line-height: 23px; white-space: nowrap; }
.slider { width: 500px; padding-top: 9px; }
.track { position: relative; height: 2px; background: #fb9ab9; }
.track-on { width: 167px; height: 2px; background: #f50057; }
.thumb {
  position: absolute;
  left: 167px;
  top: -5px;
  width: 12px;
  height: 12px;
  margin-left: -6px;
  border-radius: 50%;
  background: #f50057;
}
.tick { position: absolute; top: 0; width: 2px; height: 2px; background: #f50057; }
.tick-3 { left: 332px; }
.tick-4 { right: 0; }
.marks { display: flex; justify-content: space-between; margin-top: 12px; }
.mark {
  display: flex;
  justify-content: center;
  width: 0;
  font-family: "Liberation Sans", sans-serif;
  font-size: 14px;
  line-height: 17px;
  color: rgba(0,0,0,.54);
}
.mark.on { color: rgba(0,0,0,.87); }
.mark i { flex: none; font-style: normal; }

.side-title { margin: 0; height: 38px; font-size: 20.45px; font-weight: 400; line-height: 29px; text-align: center; }
.card {
  display: flex;
  flex-direction: column;
  height: 162px;
  margin-bottom: 10px;
  padding-top: 17px;
  background: #fff;
  border-radius: 4px;
  text-align: center;
  box-shadow: 0 5px 5px -3px rgba(0,0,0,.2), 0 8px 10px 1px rgba(0,0,0,.14), 0 3px 14px 2px rgba(0,0,0,.12);
}
.card h3 { margin: 0 0 1px; font-size: 18.4px; font-weight: 400; line-height: 26px; }
.card p { margin: 0; font-size: 15.3px; line-height: 22.500px; }
.card-actions { display: flex; justify-content: flex-end; margin-top: 4px; padding-right: 17px; }
.found {
  width: 118px;
  height: 36px;
  padding: 0;
  border: 0;
  border-radius: 4px;
  background: #1976d2;
  color: #fff;
  font: 14px "Liberation Sans", sans-serif;
  letter-spacing: .4px;
  text-transform: uppercase;
  box-shadow: 0 3px 1px -2px rgba(0,0,0,.2), 0 2px 2px 0 rgba(0,0,0,.14), 0 1px 5px 0 rgba(0,0,0,.12);
}
```
